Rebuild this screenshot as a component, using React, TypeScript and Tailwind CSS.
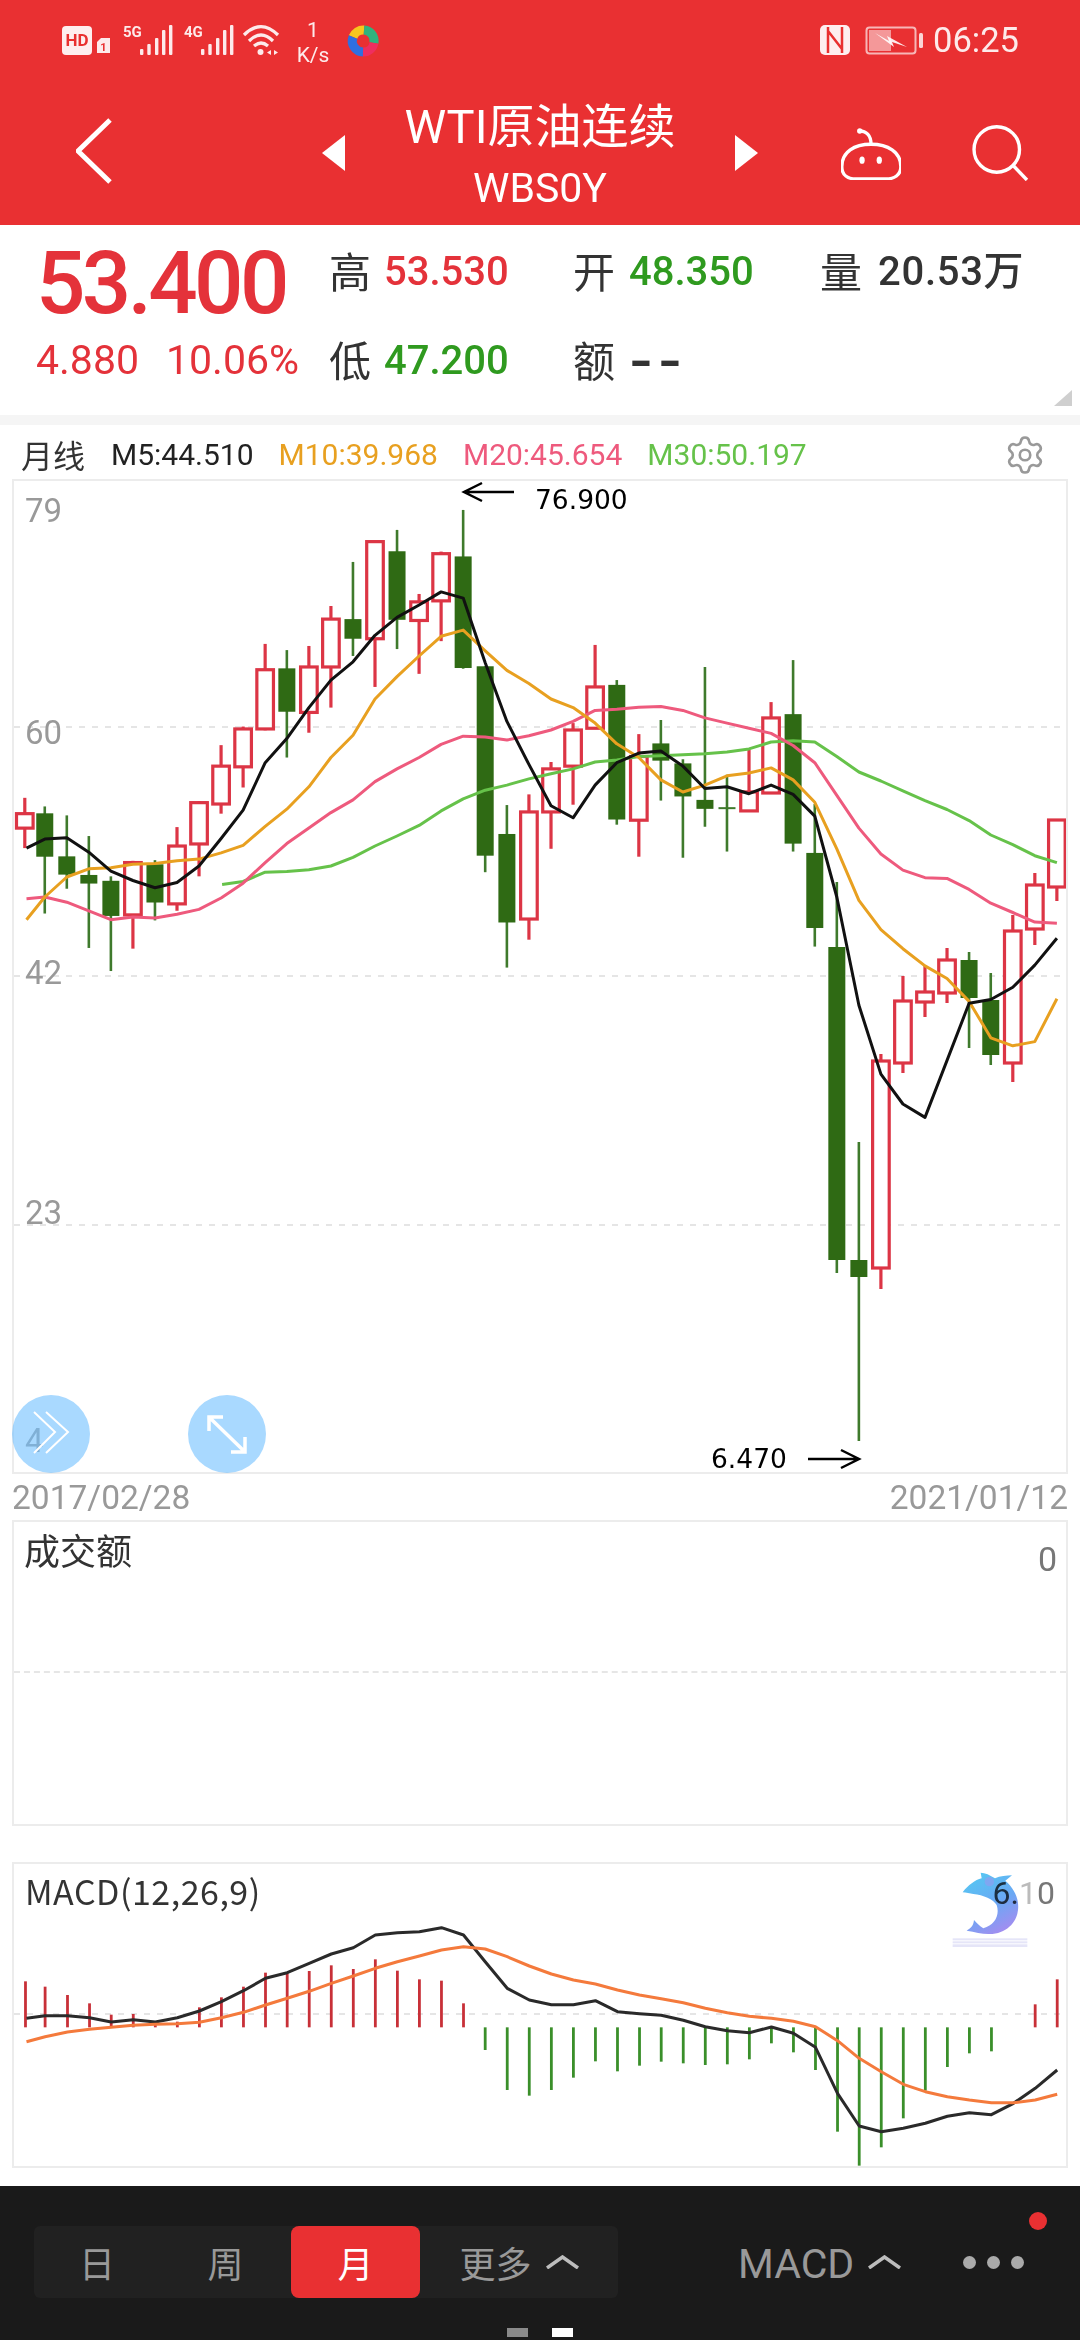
import React from "react";
import { Settings } from "lucide-react";

const S = 2.904;
const lx = (v: number) => v / S;
const rx = (v: number) => 540 + v / S;
const zy = (v: number) => 470 + v / S;
const by = (v: number) => 900 + v / 2.613;
const my = (v: number) => 1840 + v / 3;

type C = [number, number, number, number, number, "r" | "g"];
const leftC: C[] = [
  [72, 952, 998, 1040, 1098, "r"], [130, 977, 997, 1123, 1288, "g"], [194, 1003, 1122, 1175, 1216, "g"],
  [258, 1063, 1176, 1201, 1388, "g"], [322, 1180, 1193, 1295, 1455, "g"], [386, 1135, 1140, 1292, 1390, "r"],
  [450, 1133, 1145, 1256, 1308, "g"], [514, 1037, 1092, 1260, 1280, "r"], [578, 962, 966, 1086, 1180, "r"],
  [642, 799, 860, 970, 998, "r"], [706, 745, 752, 862, 922, "r"], [770, 505, 580, 752, 756, "r"],
  [833, 523, 576, 702, 835, "g"], [897, 511, 572, 704, 763, "r"], [961, 395, 433, 572, 690, "r"],
  [1025, 267, 433, 490, 540, "g"], [1089, 208, 208, 490, 630, "r"], [1153, 174, 236, 435, 520, "g"],
  [1217, 360, 383, 437, 592, "r"], [1281, 237, 243, 380, 497, "r"], [1345, 116, 251, 575, 577, "g"],
  [1409, 570, 570, 1120, 1168, "g"], [1472, 973, 1057, 1314, 1445, "g"], [1536, 942, 993, 1304, 1364, "r"],
];
const rightC: C[] = [
  [32, 848, 868, 993, 1100, "r"], [96, 735, 755, 860, 972, "r"], [160, 508, 630, 750, 752, "r"],
  [223, 610, 624, 1015, 1030, "g"], [287, 767, 832, 1017, 1123, "r"], [351, 726, 794, 844, 960, "g"],
  [415, 840, 852, 948, 1126, "g"], [479, 572, 958, 984, 1036, "g"], [543, 885, 982, 986, 1108, "g"],
  [607, 812, 935, 990, 990, "r"], [671, 674, 720, 938, 940, "r"], [735, 552, 709, 1085, 1108, "g"],
  [798, 970, 1112, 1330, 1384, "g"],
];
const lowC: C[] = [
  [862, 882, 947, 1260, 1273, "g"], [926, 1142, 1260, 1277, 1441, "g"], [990, 1054, 1061, 1268, 1289, "r"],
  [1054, 976, 1001, 1063, 1073, "r"], [1118, 966, 992, 1002, 1017, "r"], [1182, 948, 960, 993, 1003, "r"],
  [1246, 952, 960, 998, 1048, "g"], [1309, 973, 1000, 1055, 1065, "g"], [1373, 915, 931, 1063, 1082, "r"],
  [1437, 873, 885, 929, 945, "r"], [1501, 819, 820, 887, 901, "r"],
];
const candles: C[] = [
  ...leftC.map((c): C => [lx(c[0]), zy(c[1]), zy(c[2]), zy(c[3]), zy(c[4]), c[5]]),
  ...rightC.map((c): C => [rx(c[0]), zy(c[1]), zy(c[2]), zy(c[3]), zy(c[4]), c[5]]),
  ...lowC.map((c): C => [rx(c[0]), c[1], c[2], c[3], c[4], c[5]]),
];

type P = [number, number][];
const line = (a: P, b: P, c: P = []) =>
  [
    ...a.map(([x, y]) => `${lx(x).toFixed(1)},${zy(y).toFixed(1)}`),
    ...b.map(([x, y]) => `${rx(x).toFixed(1)},${zy(y).toFixed(1)}`),
    ...c.map(([x, y]) => `${rx(x).toFixed(1)},${by(y).toFixed(1)}`),
  ].join(" ");

const ma5 = line(
  [[77,1098],[130,1072],[194,1068],[258,1110],[322,1165],[386,1192],[450,1213],[514,1198],[578,1150],[642,1070],[706,988],[770,850],[833,780],[897,690],[961,610],[1025,557],[1089,480],[1153,428],[1217,392],[1281,354],[1345,372],[1409,560],[1472,730],[1536,855]],
  [[32,975],[96,1010],[160,915],[223,850],[287,822],[351,816],[415,860],[479,925],[543,920],[607,940],[671,915],[735,942],[798,1005],[862,1240]],
  [[926,275],[990,455],[1054,533],[1118,568],[1246,270],[1309,260],[1373,228],[1437,170],[1501,100]]
);
const ma10 = line(
  [[77,1306],[130,1240],[194,1182],[258,1158],[322,1155],[386,1145],[450,1143],[514,1135],[578,1130],[642,1112],[706,1090],[770,1035],[833,985],[897,920],[961,835],[1025,770],[1089,665],[1153,600],[1217,540],[1281,483],[1345,465],[1409,525],[1472,582],[1536,620]],
  [[32,665],[96,690],[160,735],[223,795],[287,835],[351,900],[415,935],[479,915],[543,888],[607,880],[671,865],[735,900],[798,965],[862,1100],[926,1250],[990,1335],[1054,1390],[1118,1440]],
  [[1182,205],[1246,265],[1309,360],[1373,381],[1437,370],[1501,258]]
);
const ma20 = line(
  [[77,1245],[130,1240],[194,1255],[258,1280],[322,1306],[386,1298],[450,1301],[514,1290],[578,1276],[642,1243],[706,1200],[770,1140],[833,1085],[897,1040],[961,995],[1025,958],[1089,905],[1153,868],[1217,835],[1281,797],[1345,773],[1409,775],[1472,784],[1536,772]],
  [[32,755],[96,730],[160,698],[223,695],[287,689],[351,687],[415,698],[479,720],[543,735],[607,750],[671,765],[735,800],[798,850],[862,945],[926,1040],[990,1115],[1054,1162],[1118,1184],[1182,1186],[1246,1218],[1309,1258],[1373,1285],[1437,1313],[1501,1316]]
);
const ma30 = line(
  [[645,1204],[706,1195],[770,1168],[833,1166],[897,1161],[961,1150],[1025,1125],[1089,1092],[1153,1063],[1217,1032],[1281,990],[1345,955],[1409,930],[1472,915],[1536,897]],
  [[32,882],[96,868],[160,848],[223,842],[287,832],[351,830],[415,827],[479,824],[543,819],[607,810],[671,790],[735,786],[798,790],[862,832],[926,877],[990,903],[1054,932],[1118,960],[1182,986],[1246,1018],[1309,1060],[1373,1088],[1437,1120],[1501,1140]]
);

const histLeft: [number, number][] = [[74,424],[131,440],[196,465],[260,490],[323,524],[387,522],[451,548],[515,545],[579,502],[643,472],[707,440],[771,398],[834,398],[898,393],[962,376],[1026,387],[1090,358],[1154,392],[1218,418],[1282,422],[1346,490]];
const histGreenLeft: [number, number][] = [[1409,630],[1473,750],[1537,767]];
const histGreenRight: [number, number][] = [[33,750],[97,713],[161,664],[225,694],[289,677],[352,665],[416,670],[480,675],[544,673],[608,658],[672,610],[736,637],[800,690],[864,875],[927,977],[991,922],[1055,835],[1119,752],[1183,681],[1247,640],[1311,634]];

const mline = (a: P, b: P) =>
  [
    ...a.map(([x, y]) => `${lx(x).toFixed(1)},${my(y).toFixed(1)}`),
    ...b.map(([x, y]) => `${rx(x).toFixed(1)},${my(y).toFixed(1)}`),
  ].join(" ");
const macdBlack = mline(
  [[77,535],[131,527],[196,527],[260,533],[323,546],[387,539],[451,546],[515,533],[579,513],[643,485],[707,452],[771,415],[834,398],[898,370],[962,342],[1026,323],[1090,285],[1154,278],[1218,275],[1282,263],[1346,285],[1409,365],[1473,445],[1537,480]],
  [[33,494],[97,494],[161,482],[225,515],[289,521],[352,526],[416,541],[480,560],[544,572],[608,578],[672,561],[736,580],[800,622],[864,760],[927,858],[991,875],[1055,865],[1119,850],[1183,829],[1247,818],[1311,824],[1375,790],[1438,745],[1502,690]]
);
const macdOrange = mline(
  [[77,605],[131,590],[196,576],[260,568],[323,562],[387,556],[451,553],[515,551],[579,547],[643,533],[707,517],[771,495],[834,475],[898,454],[962,430],[1026,408],[1090,385],[1154,365],[1218,348],[1282,330],[1346,320],[1409,327],[1473,350],[1537,378]],
  [[33,402],[97,420],[161,432],[225,450],[289,465],[352,476],[416,488],[480,505],[544,518],[608,529],[672,535],[736,544],[800,560],[864,602],[927,655],[991,695],[1055,733],[1119,755],[1183,770],[1247,780],[1311,788],[1375,788],[1438,780],[1502,763]]
);

const ROBOTO = "font-['Roboto',sans-serif]";
const CJK = "font-['Noto_Sans_CJK_SC',sans-serif]";

function Bars({ x }: { x: number }) {
  const xs = [0, 7.3, 15, 22, 29];
  const tops = [49, 44, 38, 30, 25];
  return (
    <g fill="#fff" fillOpacity="0.9">
      {xs.map((d, i) => (
        <rect key={i} x={x + d} y={tops[i]} width="3.4" height={55 - tops[i]} rx="1" />
      ))}
    </g>
  );
}

function StatusLeft() {
  return (
    <svg width="330" height="56" viewBox="60 14 330 56" className="block">
      <rect x="62" y="26" width="30" height="29" rx="4" fill="#fff" fillOpacity="0.92" />
      <text x="77" y="46" fontSize="17" fontWeight="700" fill="#e93030" textAnchor="middle" fontFamily="Roboto">HD</text>
      <path d="M97 42 l4 -4 h9 v15 h-13 z" fill="#fff" fillOpacity="0.9" />
      <text x="103.500" y="51" fontSize="11" fontWeight="700" fill="#e93030" textAnchor="middle" fontFamily="Roboto">1</text>
      <text x="123" y="37" fontSize="15" fontWeight="700" fill="#fff" fillOpacity="0.9" fontFamily="Roboto">5G</text>
      <Bars x={140} />
      <text x="184" y="37" fontSize="15" fontWeight="700" fill="#fff" fillOpacity="0.9" fontFamily="Roboto">4G</text>
      <Bars x={201} />
      <g fill="none" stroke="#fff" strokeOpacity="0.9" strokeWidth="3.2">
        <path d="M244 35 Q261 18 278 35" />
        <path d="M249 41 Q261 29 273 41" />
        <path d="M254 46 Q261 40 268 46" />
      </g>
      <circle cx="260.500" cy="52" r="3" fill="#fff" fillOpacity="0.9" />
      <path d="M271 50 v5 l-4 -2.500 z M274 50 v5 l4 -2.500 z" fill="#fff" fillOpacity="0.9" />
      <text x="313" y="37" fontSize="21" fill="#fff" fillOpacity="0.9" textAnchor="middle" fontFamily="Roboto">1</text>
      <text x="313" y="62" fontSize="21" fill="#fff" fillOpacity="0.9" textAnchor="middle" fontFamily="Roboto">K/s</text>
      <g fill="none" strokeWidth="9">
        <path d="M353 37 A11 11 0 0 1 364 30" stroke="#f7c51e" />
        <path d="M364 30 A11 11 0 0 1 374 43" stroke="#2fb37d" />
        <path d="M374 43 A11 11 0 0 1 363 52" stroke="#ef2e5f" />
        <path d="M363 52 A11 11 0 0 1 353 37" stroke="#2f6fe0" />
      </g>
    </svg>
  );
}

function StatusRight() {
  return (
    <svg width="106" height="40" viewBox="820 20 106 40" className="block">
      <rect x="822" y="25" width="30" height="30" rx="5" fill="#fff" fillOpacity="0.92" />
      <path d="M830 27 V53 M844 27 V53 M830 31 L844 49" stroke="#e93030" strokeWidth="2.500" fill="none" />
      <rect x="868.500" y="27.500" width="49" height="26" rx="3" fill="none" stroke="#fff" strokeOpacity="0.65" strokeWidth="2" />
      <rect x="871" y="30" width="22" height="21" fill="#fff" fillOpacity="0.5" />
      <rect x="921" y="33" width="4" height="15" rx="1.500" fill="#fff" fillOpacity="0.8" />
      <path d="M877 33 L891 41 L889 36 L909 47 L894 42 L896 47 Z" fill="#fff" fillOpacity="0.9" />
    </svg>
  );
}

function Robot() {
  return (
    <svg width="60" height="53" viewBox="60 50 180 160" fill="none" stroke="#fff" strokeWidth="10" className="block shrink-0">
      <path d="M62 170 C62 125 100 102 150 102 C200 102 240 125 240 170 C240 195 220 207 195 207 H105 C80 207 62 195 62 170 Z" />
      <path d="M116 62 C135 62 150 75 150 102" />
      <circle cx="116" cy="62" r="8" fill="#fff" stroke="none" />
      <ellipse cx="123" cy="150" rx="8" ry="11" fill="#fff" stroke="none" />
      <ellipse cx="175" cy="150" rx="8" ry="11" fill="#fff" stroke="none" />
    </svg>
  );
}

function Search() {
  return (
    <svg width="57" height="57" viewBox="450 40 168 168" fill="none" stroke="#fff" strokeWidth="10" className="block shrink-0">
      <circle cx="523" cy="115" r="67" />
      <path d="M572 163 L612 205" />
    </svg>
  );
}

function Up() {
  return (
    <svg width="33" height="14" viewBox="0 0 33 14" fill="none" stroke="#bdbdbd" strokeWidth="3.500" className="block shrink-0">
      <path d="M1 13 L16.500 2 L32 13" />
    </svg>
  );
}

function Dolphin() {
  return (
    <svg viewBox="0 12 390 288" className="absolute left-[926px] top-0 w-[130px] h-[96px] mix-blend-multiply">
      <defs>
        <linearGradient id="dol" x1="0.200" y1="0" x2="0.700" y2="1">
          <stop offset="0" stopColor="#55c8f2" />
          <stop offset="0.550" stopColor="#6aa8f4" />
          <stop offset="1" stopColor="#a58cf0" />
        </linearGradient>
      </defs>
      <g fill="#e5e5f8">
        <rect x="38" y="235" width="224" height="6" />
        <rect x="38" y="244" width="224" height="6" />
        <rect x="38" y="253" width="224" height="8" />
      </g>
      <path
        d="M68 97 C85 75 105 60 125 55 L122 38 C135 38 150 45 165 55 C180 48 200 46 216 46 L196 62 C222 85 238 115 234 150 C230 190 195 224 145 222 C125 222 105 216 80 212 C90 205 100 200 102 180 C112 190 118 198 130 205 C165 195 180 165 170 135 C160 118 130 105 100 102 C90 100 78 98 68 97 Z"
        fill="url(#dol)"
      />
      <circle cx="148" cy="65" r="14" fill="#8f9ef0" fillOpacity="0.7" />
    </svg>
  );
}

export default function App() {
  return (
    <div className={`w-[1080px] h-[2340px] bg-white overflow-hidden flex flex-col ${ROBOTO}`}>
      {/* header */}
      <div className="bg-[#e93032] h-[225px] shrink-0 flex flex-col">
        <div className="h-[78px] flex justify-between pl-[60px] pr-[61px]">
          <div className="mt-[14px]"><StatusLeft /></div>
          <div className="mt-[20px] flex items-start gap-[9px] h-[40px]">
            <StatusRight />
            <span className="text-[34.500px] leading-[40px] text-white/90">06:25</span>
          </div>
        </div>
        <div className="h-[147px] flex items-center pl-[76px]">
          <svg width="38" height="66" viewBox="76 118 38 66" fill="none" stroke="#fff" strokeWidth="5" className="block shrink-0 -mt-[2px]">
            <path d="M110 120 L78 151 L110 182" />
          </svg>
          <svg width="23" height="36" viewBox="0 0 23 36" className="block shrink-0 ml-[208px] mt-[3px]"><path d="M23 0 V36 L0 18 Z" fill="#fff" /></svg>
          <div className="w-[390px] pt-[12px] flex flex-col items-center text-white">
            <div className="text-[47px] leading-[60px] font-['Roboto','Noto_Sans_CJK_SC',sans-serif]">WTI原油连续</div>
            <div className="text-[41px] leading-[62px]">WBS0Y</div>
          </div>
          <svg width="23" height="36" viewBox="0 0 23 36" className="block shrink-0 mt-[3px]"><path d="M0 0 V36 L23 18 Z" fill="#fff" /></svg>
          <div className="ml-[83px] mt-[3px]"><Robot /></div>
          <div className="ml-[71px] mt-[1px]"><Search /></div>
        </div>
      </div>

      {/* stats */}
      <div className="relative h-[190px] shrink-0 flex">
        <div className="w-[329px] pl-[36px] shrink-0">
          <div className="h-[114px] pt-[2px] text-[87px] leading-[112px] font-medium text-[#e4323a] tracking-[-3.6px]">53.400</div>
          <div className="h-[42px] flex gap-[27px] text-[41px] leading-[42px] text-[#e4323a]">
            <span>4.880</span>
            <span>10.06%</span>
          </div>
        </div>
        <div className="pt-[2px] flex flex-col">
          <div className="h-[89px] flex items-center">
            <Stat w="w-[244px]" label="高" value="53.530" cls="ml-[13px] text-[#e4323a]" />
            <Stat w="w-[247px]" label="开" value="48.350" cls="ml-[14px] text-[#2f9a1f]" />
            <Stat w="w-[240px]" label="量" value="20.53万" cls="ml-[16px] text-[#333333] tracking-[0.7px]" />
          </div>
          <div className="h-[89px] flex items-center">
            <Stat w="w-[244px]" label="低" value="47.200" cls="ml-[13px] text-[#2f9a1f]" />
            <div className="w-[247px] flex items-center">
              <span className={`${CJK} text-[42px] leading-[56px] -mt-[4px] text-[#333333]`}>额</span>
              <span className="ml-[16px] text-[72px] leading-[56px] tracking-[9px] text-[#333333]">--</span>
            </div>
          </div>
        </div>
        <svg width="18" height="16" viewBox="0 0 18 16" className="absolute left-[1054px] top-[165px]"><path d="M18 0 V16 H0 Z" fill="#cfcfcf" /></svg>
      </div>
      <div className="h-[10px] shrink-0 bg-[#f5f5f5]" />

      {/* MA row */}
      <div className="h-[54px] shrink-0 flex items-center pl-[21px] pt-[5px] gap-[25px] text-[30px] leading-[49px]">
        <span className={`${CJK} text-[32px] text-[#333333]`}>月线</span>
        <span className="text-[#222222] ml-[1px]">M5:44.510</span>
        <span className="text-[#e8a020]">M10:39.968</span>
        <span className="text-[#ee5a7d]">M20:45.654</span>
        <span className="text-[#66c24a]">M30:50.197</span>
        <Settings size={42} strokeWidth={1.5} color="#999999" className="ml-auto mr-[34px]" />
      </div>

      {/* main chart */}
      <div className="relative mx-[12px] h-[995px] shrink-0 border-2 border-[#ececec]">
        <svg viewBox="14 481 1052 991" className="block w-full h-full">
          <g stroke="#dddddd" strokeWidth="1.500" strokeDasharray="6 7">
            <line x1="14" x2="1064" y1="727" y2="727" />
            <line x1="14" x2="1064" y1="976" y2="976" />
            <line x1="14" x2="1064" y1="1225" y2="1225" />
          </g>
          <g fontFamily="Roboto" fontSize="33" fill="#999999">
            <text x="25" y="522">79</text>
            <text x="25" y="744">60</text>
            <text x="25" y="984">42</text>
            <text x="25" y="1224">23</text>
            <text x="25" y="1452">4</text>
          </g>
          {candles.map(([x, hi, top, bot, lo, c], i) =>
            c === "g" ? (
              <g key={i}>
                <line x1={x} x2={x} y1={hi} y2={lo} stroke="#3f7a2c" strokeWidth="2.600" />
                {bot - top < 3 ? (
                  <line x1={x - 8.5} x2={x + 8.5} y1={top} y2={top} stroke="#3f7a2c" strokeWidth="2" />
                ) : (
                  <rect x={x - 8.5} y={top} width="17" height={bot - top} fill="#2f6a14" />
                )}
              </g>
            ) : (
              <g key={i}>
                <line x1={x} x2={x} y1={hi} y2={top} stroke="#dc3545" strokeWidth="3.200" />
                <line x1={x} x2={x} y1={bot} y2={lo} stroke="#dc3545" strokeWidth="3.200" />
                <rect x={x - 8.3} y={top} width="16.600" height={bot - top} fill="#ffffff" stroke="#dc3545" strokeWidth="3.200" />
              </g>
            )
          )}
          <g fill="none" strokeWidth="3" strokeLinejoin="round">
            <polyline points={ma30} stroke="#66c24a" />
            <polyline points={ma20} stroke="#ee5a7d" />
            <polyline points={ma10} stroke="#e8a020" />
            <polyline points={ma5} stroke="#111111" />
          </g>
          <g fill="none" stroke="#000" strokeWidth="2.500">
            <path d="M514 492 H464 M482 483 L464 492 L482 501" />
            <path d="M808 1459 H859 M841 1450 L859 1459 L841 1468" />
          </g>
        </svg>
        <div className="absolute left-[521px] top-[4px] font-['DejaVu_Sans',sans-serif] text-[26.500px] leading-[30px] text-black">76.900</div>
        <div className="absolute left-[697px] top-[965px] font-['DejaVu_Sans',sans-serif] text-[26.500px] leading-[26px] text-black">6.470</div>
        <div className="absolute -left-[2px] top-[914px] w-[78px] h-[78px] rounded-full bg-[#6fbfff]/60">
          <svg viewBox="0 0 78 78" className="block w-full h-full" fill="none" stroke="#fff" strokeWidth="2">
            <path d="M22 17 L43 37 L22 58" />
            <path d="M34 17 L56 37 L34 58" />
          </svg>
        </div>
        <div className="absolute left-[174px] top-[914px] w-[78px] h-[78px] rounded-full bg-[#6fbfff]/60">
          <svg viewBox="0 0 78 78" className="block w-full h-full" fill="none" stroke="#fff" strokeWidth="3.500">
            <path d="M22 23 L56 56 M21 36 V22 H35 M57 42 V57 H43" />
          </svg>
        </div>
      </div>

      {/* dates */}
      <div className="h-[46px] shrink-0 flex justify-between items-center px-[12px] pt-[2px] text-[33.500px] leading-[44px] text-[#999999]">
        <span>2017/02/28</span>
        <span>2021/01/12</span>
      </div>

      {/* volume */}
      <div className="mx-[12px] h-[306px] shrink-0 border-2 border-[#ececec]">
        <div className="h-[151px] flex justify-between items-start border-b-2 border-dashed border-[#e6e6e6] pl-[10px] pr-[9px]">
          <span className={`${CJK} text-[36px] leading-[56px] -mt-[1px] text-[#333333]`}>成交额</span>
          <span className="text-[34px] leading-[56px] mt-[9px] text-[#777777]">0</span>
        </div>
      </div>

      <div className="h-[36px] shrink-0" />

      {/* MACD */}
      <div className="relative mx-[12px] h-[306px] shrink-0 border-2 border-[#ececec]">
        <svg viewBox="14 1864 1052 302" className="block w-full h-full">
          <line x1="14" x2="1064" y1="2014" y2="2014" stroke="#dddddd" strokeWidth="1.500" strokeDasharray="6 7" />
          <g stroke="#c83038" strokeWidth="2.800">
            {histLeft.map(([x, t], i) => (
              <line key={i} x1={lx(x)} x2={lx(x)} y1={my(t)} y2={my(562)} />
            ))}
            <line x1={rx(1438)} x2={rx(1438)} y1={my(493)} y2={my(562)} />
            <line x1={rx(1502)} x2={rx(1502)} y1={my(418)} y2={my(562)} />
          </g>
          <g stroke="#3a8f2a" strokeWidth="2.800">
            {histGreenLeft.map(([x, b], i) => (
              <line key={i} x1={lx(x)} x2={lx(x)} y1={my(562)} y2={my(b)} />
            ))}
            {histGreenRight.map(([x, b], i) => (
              <line key={i} x1={rx(x)} x2={rx(x)} y1={my(562)} y2={my(b)} />
            ))}
          </g>
          <g fill="none" strokeWidth="3" strokeLinejoin="round">
            <polyline points={macdBlack} stroke="#2a2a2a" />
            <polyline points={macdOrange} stroke="#f47a3c" />
          </g>
        </svg>
        <div className={`absolute left-[11px] top-[5px] ${CJK} text-[34px] leading-[44px] tracking-[0.5px] text-[#333333]`}>MACD(12,26,9)</div>
        <div className="absolute right-[11px] top-[9px] text-[32px] leading-[40px]">
          <span className="text-[#444444]">6.</span>
          <span className="text-[#bbbbbb]">1</span>
          <span className="text-[#777777]">0</span>
        </div>
        <Dolphin />
      </div>

      <div className="h-[18px] shrink-0" />

      {/* bottom bar */}
      <div className="relative h-[154px] shrink-0 bg-[#1a1a1a] flex flex-col">
        <div className="mt-[40px] h-[72px] flex items-center">
          <div className={`ml-[34px] w-[584px] h-[72px] shrink-0 bg-[#212121] rounded-[6px] flex ${CJK} text-[36px] text-[#999999]`}>
            <div className="w-[126px] flex items-center justify-center">日</div>
            <div className="w-[131px] flex items-center justify-center">周</div>
            <div className="w-[129px] flex items-center justify-center bg-[#e93032] text-white rounded-[8px]">月</div>
            <div className="w-[198px] flex items-center justify-center gap-[14px]">
              <span>更多</span>
              <Up />
            </div>
          </div>
          <span className="ml-[120px] pt-[4px] text-[41px] leading-[68px] text-[#999999]">MACD</span>
          <div className="ml-[14px]"><Up /></div>
          <div className="ml-[62px] flex gap-[11px]">
            <span className="w-[13px] h-[13px] rounded-full bg-[#aaaaaa]" />
            <span className="w-[13px] h-[13px] rounded-full bg-[#aaaaaa]" />
            <span className="w-[13px] h-[13px] rounded-full bg-[#aaaaaa]" />
          </div>
        </div>
        <div className="absolute left-[1029px] top-[26px] w-[18px] h-[18px] rounded-full bg-[#e93032]" />
        <div className="mt-[30px] flex justify-center gap-[24px]">
          <span className="w-[21px] h-[9px] bg-[#8a8a8a]" />
          <span className="w-[21px] h-[9px] bg-white" />
        </div>
      </div>
    </div>
  );
}

function Stat({ w, label, value, cls }: { w: string; label: string; value: string; cls: string }) {
  return (
    <div className={`${w} flex items-center`}>
      <span className={`${CJK} text-[42px] leading-[56px] -mt-[4px] text-[#333333]`}>{label}</span>
      <span className={`text-[40px] leading-[56px] font-medium font-['Roboto','Noto_Sans_CJK_SC',sans-serif] ${cls}`}>{value}</span>
    </div>
  );
}
